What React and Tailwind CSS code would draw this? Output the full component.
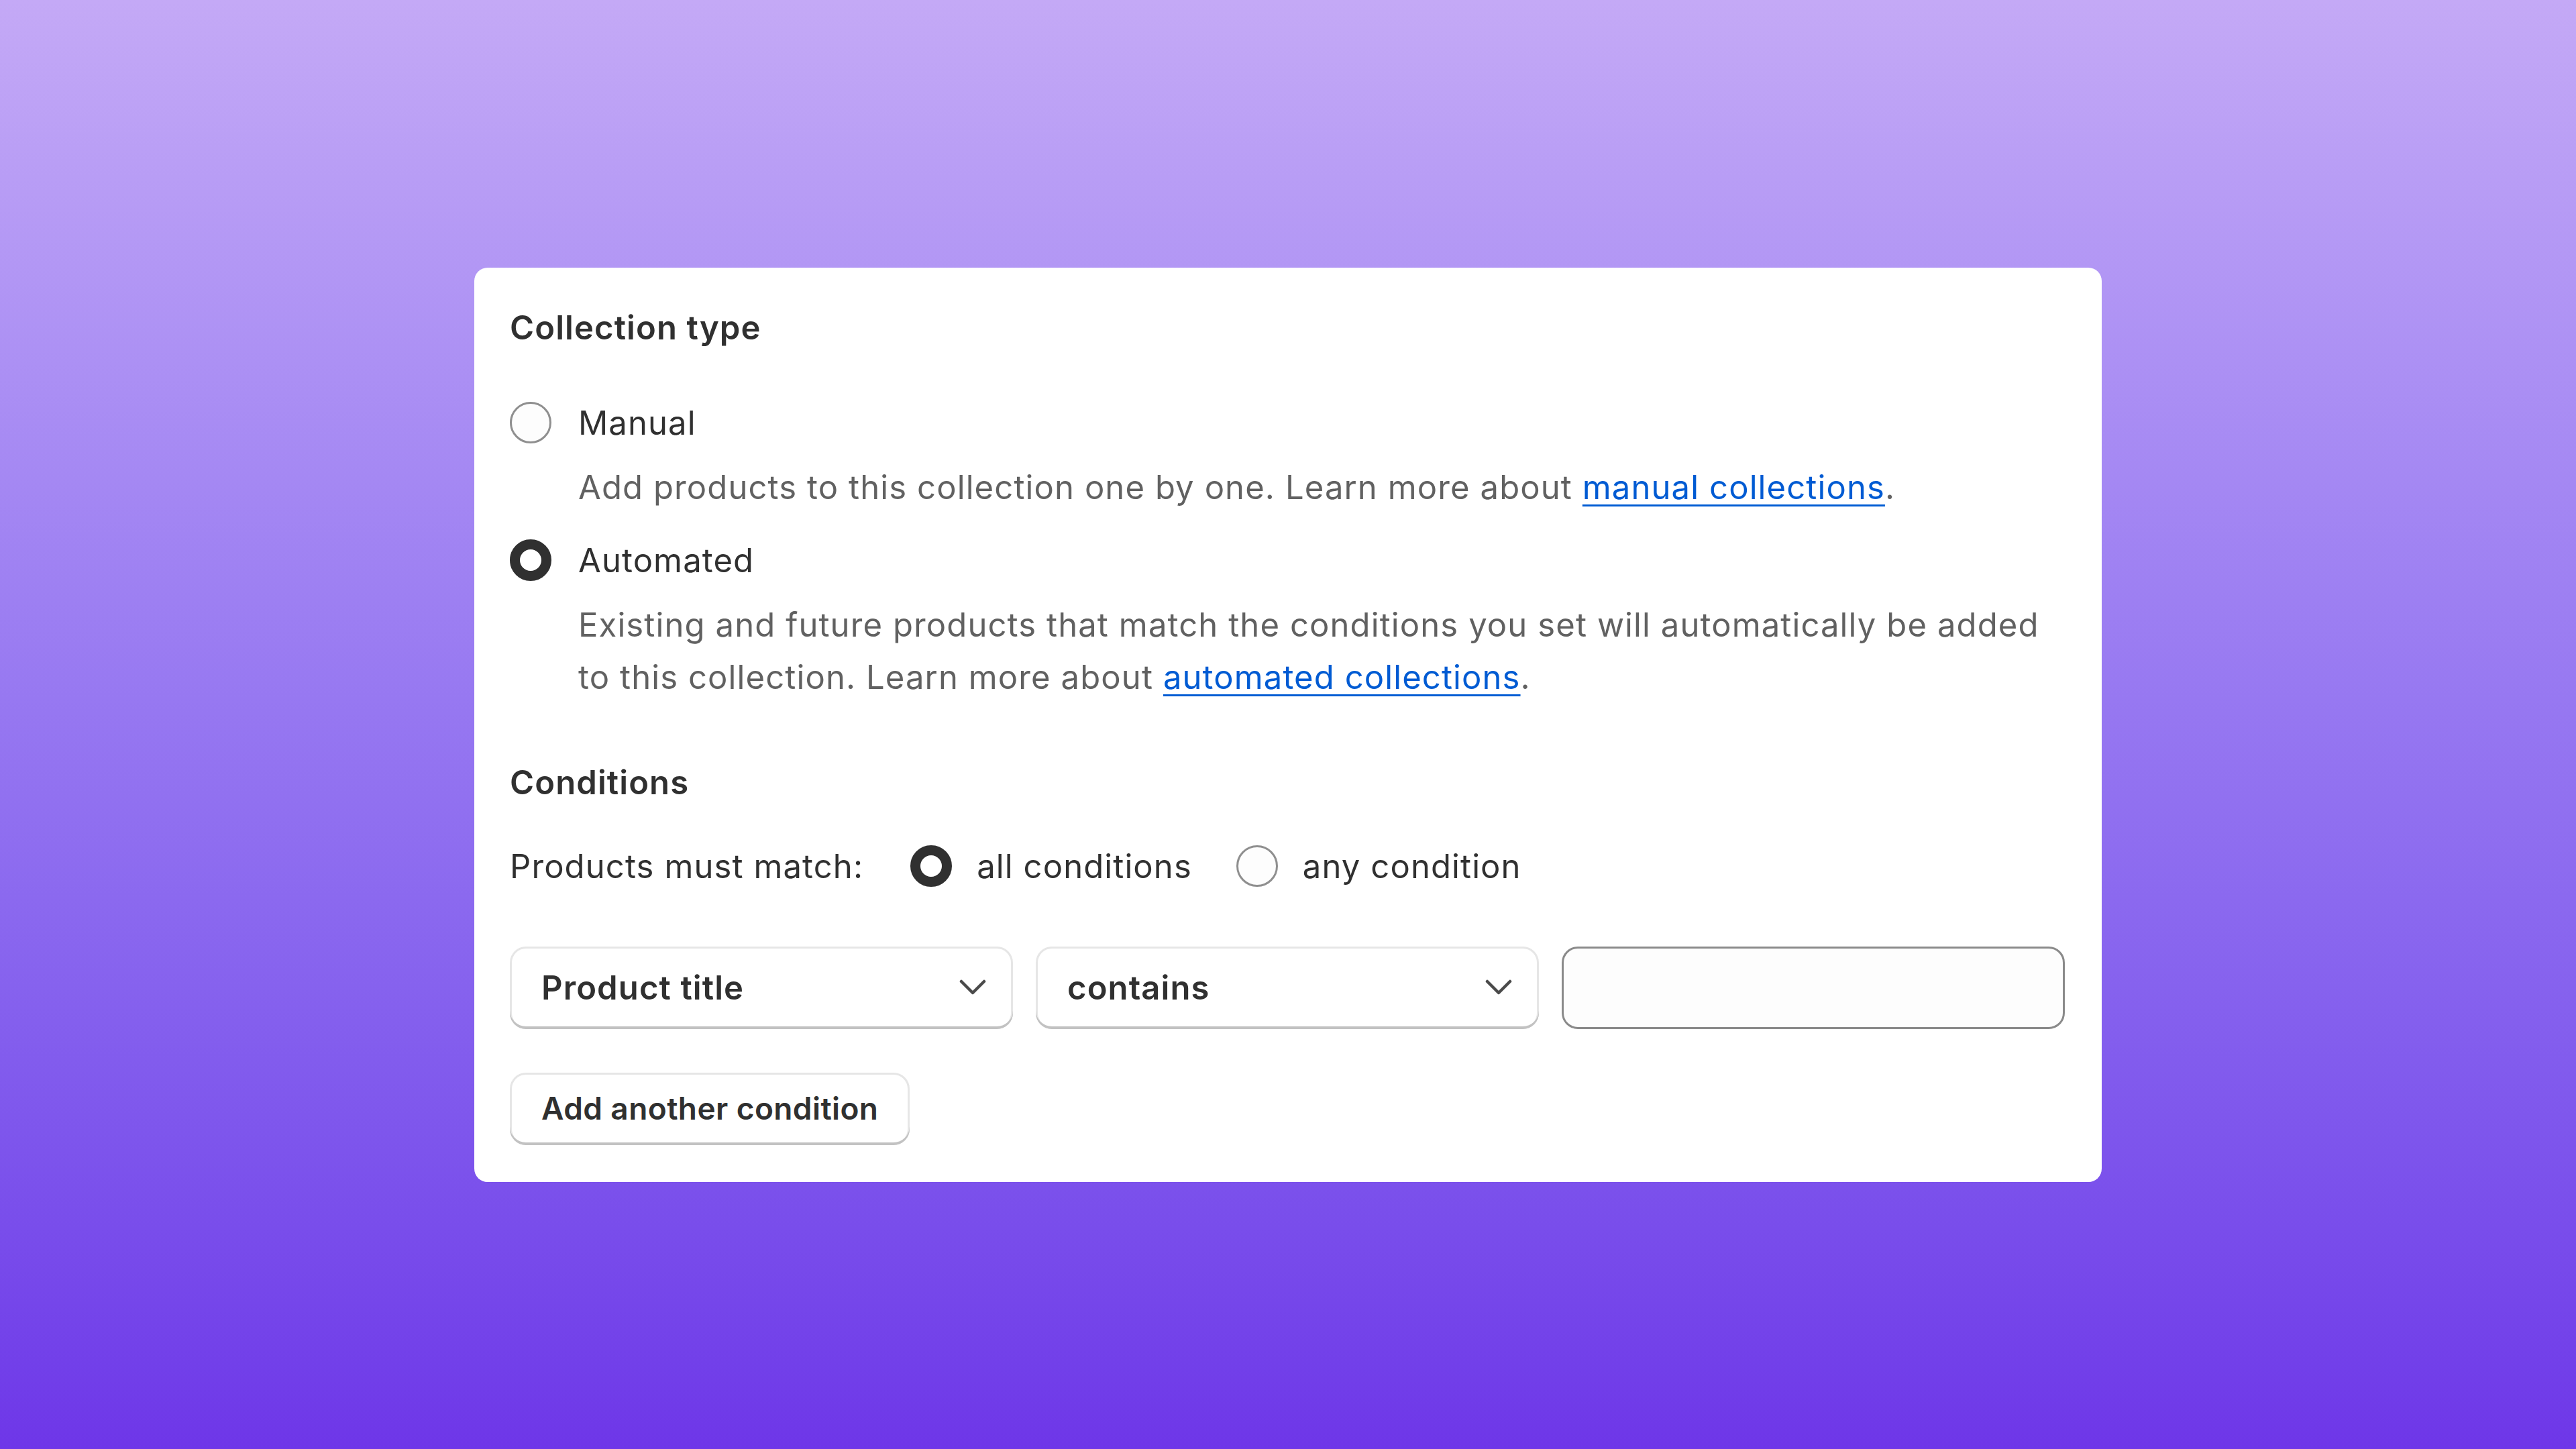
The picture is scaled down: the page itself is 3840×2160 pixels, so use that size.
import React from 'react'

function Radio({ checked }) {
  return checked ? (
    <span className="shrink-0 w-[62px] h-[62px] rounded-full border-[15px] border-[#303030] bg-white" />
  ) : (
    <span className="shrink-0 w-[62px] h-[62px] rounded-full border-[3px] border-[#8f8f8f] bg-[#fdfdfd]" />
  )
}

function Chevron() {
  return (
    <svg className="w-[40px] h-[26px]" viewBox="0 0 40 26" fill="none">
      <polyline points="3,4 20,21 37,4" stroke="#4a4a4a" strokeWidth={4.5} strokeLinecap="round" strokeLinejoin="round" />
    </svg>
  )
}

function Select({ label }) {
  return (
    <div className="h-[123px] rounded-[24px] bg-white flex items-center justify-between pl-[47px] pr-[40px] shadow-[inset_0_-4px_0_0_#c2c2c2,inset_0_0_0_3px_#e6e6e6]">
      <span className="font-semibold">{label}</span>
      <Chevron />
    </div>
  )
}

export default function App() {
  return (
    <div className="min-h-screen w-full flex items-center justify-center bg-linear-to-b from-[#c4a9f6] to-[#6e36e8] font-[Inter,sans-serif]">
      <div className="w-[2426px] bg-white rounded-[20px] py-[55px] pl-[53px] pr-[55px] text-[49px] leading-[69px] tracking-[1.1px] text-[#303030]">
        <h2 className="font-semibold">Collection type</h2>

        {/* Manual */}
        <div className="mt-[73px]">
          <label className="flex items-center gap-[40px]">
            <Radio />
            <span>Manual</span>
          </label>
          <p className="mt-[23px] pl-[102px] text-[#616161] leading-[78px]">
            Add products to this collection one by one. Learn more about{' '}
            <a href="#" className="text-[#005bd3] underline decoration-[3px] underline-offset-[8px]">manual collections</a>.
          </p>
        </div>

        {/* Automated */}
        <div className="mt-[35px]">
          <label className="flex items-center gap-[40px]">
            <Radio checked />
            <span>Automated</span>
          </label>
          <p className="mt-[23px] pl-[102px] text-[#616161] leading-[78px]">
            Existing and future products that match the conditions you set will automatically be added
            <br />
            to this collection. Learn more about{' '}
            <a href="#" className="text-[#005bd3] underline decoration-[3px] underline-offset-[8px]">automated collections</a>.
          </p>
        </div>

        <h2 className="mt-[83px] font-semibold">Conditions</h2>

        <div className="mt-[56px] flex items-center">
          <span>Products must match:</span>
          <label className="ml-[70px] flex items-center gap-[37px]">
            <Radio checked />
            <span>all conditions</span>
          </label>
          <label className="ml-[66px] flex items-center gap-[37px]">
            <Radio />
            <span>any condition</span>
          </label>
        </div>

        <div className="mt-[85px] grid grid-cols-3 gap-[34px]">
          <Select label="Product title" />
          <Select label="contains" />
          <input
            className="h-[123px] rounded-[24px] border-[3px] border-[#8a8a8a] bg-[#fdfdfd] px-[40px] outline-none"
            defaultValue=""
          />
        </div>

        <button className="mt-[65px] h-[108px] px-[47px] rounded-[24px] bg-white text-[46px] font-semibold tracking-[0.4px] shadow-[inset_0_-4px_0_0_#c2c2c2,inset_0_0_0_3px_#e6e6e6]">
          Add another condition
        </button>
      </div>
    </div>
  )
}
